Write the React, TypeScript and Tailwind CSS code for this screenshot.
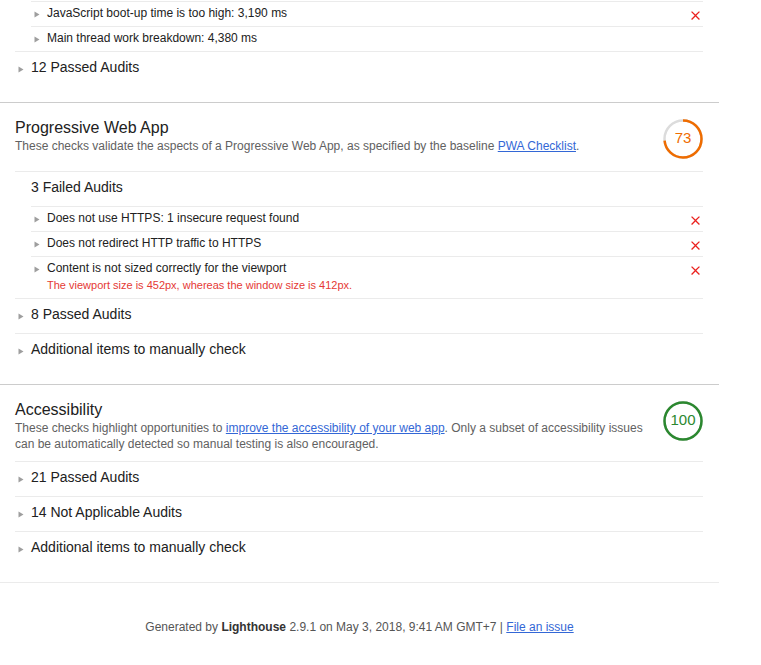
import { ReactNode } from "react";

const font = { fontFamily: '"Liberation Sans", Arial, sans-serif' };

function Arrow() {
  return (
    <svg width="6" height="7" viewBox="0 0 6 7">
      <polygon points="0.5,0.5 5.5,3.5 0.5,6.5" fill="#9e9e9e" />
    </svg>
  );
}

function FailIcon() {
  return (
    <svg width="15" height="15" viewBox="0 0 24 24" className="mt-[6px] shrink-0">
      <path
        fill="#eb211e"
        d="M19 6.41L17.59 5 12 10.59 6.41 5 5 6.41 10.59 12 5 17.59 6.41 19 12 13.41 17.59 19 19 17.59 13.41 12z"
      />
    </svg>
  );
}

interface AuditRowProps {
  title: string;
  message?: string;
  fail?: boolean;
}

function AuditRow({ title, message, fail }: AuditRowProps) {
  return (
    <div className="ml-4 flex items-start border-t border-[#ebebeb]">
      <span className="flex w-4 shrink-0 pl-[3px] pt-[9px]">
        <Arrow />
      </span>
      <div className="flex-1 pb-[6px] pt-[4px]">
        <div className="text-[12px] leading-[14px] text-[#212121]">{title}</div>
        {message && (
          <div className="mt-[4px] text-[11px] leading-[13px] text-[#e53935]">
            {message}
          </div>
        )}
      </div>
      {fail && <FailIcon />}
    </div>
  );
}

interface GroupProps {
  title?: string;
  arrow?: boolean;
  children?: ReactNode;
}

function Group({ title, arrow = true, children }: GroupProps) {
  return (
    <div className={title ? "border-t border-[#ebebeb]" : ""}>
      {title && (
        <div className="flex items-start pb-[10px] pt-[6px]">
          <span className="flex w-4 shrink-0 pl-[3px] pt-[8px]">
            {arrow && <Arrow />}
          </span>
          <span className="text-[14px] leading-[18px] text-[#212121]">{title}</span>
        </div>
      )}
      {children}
    </div>
  );
}

function Gauge({ score, color }: { score: number; color: string }) {
  const r = 18.5;
  const c = 2 * Math.PI * r;
  return (
    <div className="relative h-10 w-10 shrink-0">
      <svg width="40" height="40" viewBox="0 0 40 40" className="-rotate-90">
        <circle cx="20" cy="20" r={r} fill="none" stroke="#dcdcdc" strokeWidth="2.5" />
        <circle
          cx="20"
          cy="20"
          r={r}
          fill="none"
          stroke={color}
          strokeWidth="2.5"
          strokeDasharray={`${(c * score) / 100} ${c}`}
        />
      </svg>
      <span
        className="absolute inset-0 flex items-center justify-center pb-[2px] text-[15px]"
        style={{ color }}
      >
        {score}
      </span>
    </div>
  );
}

interface SectionHeaderProps {
  title: string;
  score: number;
  color: string;
  children: ReactNode;
}

function SectionHeader({ title, score, color, children }: SectionHeaderProps) {
  return (
    <div className="flex items-start">
      <div className="flex-1 pb-[9px]">
        <div className="text-[16px] leading-[20px] text-[#212121]">{title}</div>
        <div className="text-[12px] leading-[16px] text-[#616161]">{children}</div>
      </div>
      <div className="ml-4 mt-[1px] pb-[12px]">
        <Gauge score={score} color={color} />
      </div>
    </div>
  );
}

export default function App() {
  return (
    <div className="min-h-[665px] bg-white" style={font}>
      <div className="w-[719px] pt-px">
        <div className="pb-4 pl-[15px] pr-4">
          <Group>
            <AuditRow title="JavaScript boot-up time is too high: 3,190 ms" fail />
            <AuditRow title="Main thread work breakdown: 4,380 ms" />
          </Group>
          <Group title="12 Passed Audits" />
        </div>

        <div className="border-t border-[#cccccc] pb-4 pl-[15px] pr-4 pt-[15px]">
          <SectionHeader title="Progressive Web App" score={73} color="#ef6c00">
            These checks validate the aspects of a Progressive Web App, as specified by the
            baseline{" "}
            <a href="#" className="text-[#3367d6] underline">
              PWA Checklist
            </a>
            .
          </SectionHeader>
          <Group title="3 Failed Audits" arrow={false}>
            <AuditRow title="Does not use HTTPS: 1 insecure request found" fail />
            <AuditRow title="Does not redirect HTTP traffic to HTTPS" fail />
            <AuditRow
              title="Content is not sized correctly for the viewport"
              message="The viewport size is 452px, whereas the window size is 412px."
              fail
            />
          </Group>
          <Group title="8 Passed Audits" />
          <Group title="Additional items to manually check" />
        </div>

        <div className="border-t border-[#cccccc] pb-4 pl-[15px] pr-4 pt-[15px]">
          <SectionHeader title="Accessibility" score={100} color="#2b882f">
            These checks highlight opportunities to{" "}
            <a href="#" className="text-[#3367d6] underline">
              improve the accessibility of your web app
            </a>
            . Only a subset of accessibility issues can be automatically detected so manual
            testing is also encouraged.
          </SectionHeader>
          <Group title="21 Passed Audits" />
          <Group title="14 Not Applicable Audits" />
          <Group title="Additional items to manually check" />
        </div>

        <footer className="border-t border-[#ebebeb] pt-[36px] text-center text-[12px] leading-[16px] text-[#555555]">
          Generated by <b className="text-[#333333]">Lighthouse</b> 2.9.1 on May 3, 2018, 9:41
          AM GMT+7 |{" "}
          <a href="#" className="text-[#3367d6] underline">
            File an issue
          </a>
        </footer>
      </div>
    </div>
  );
}
